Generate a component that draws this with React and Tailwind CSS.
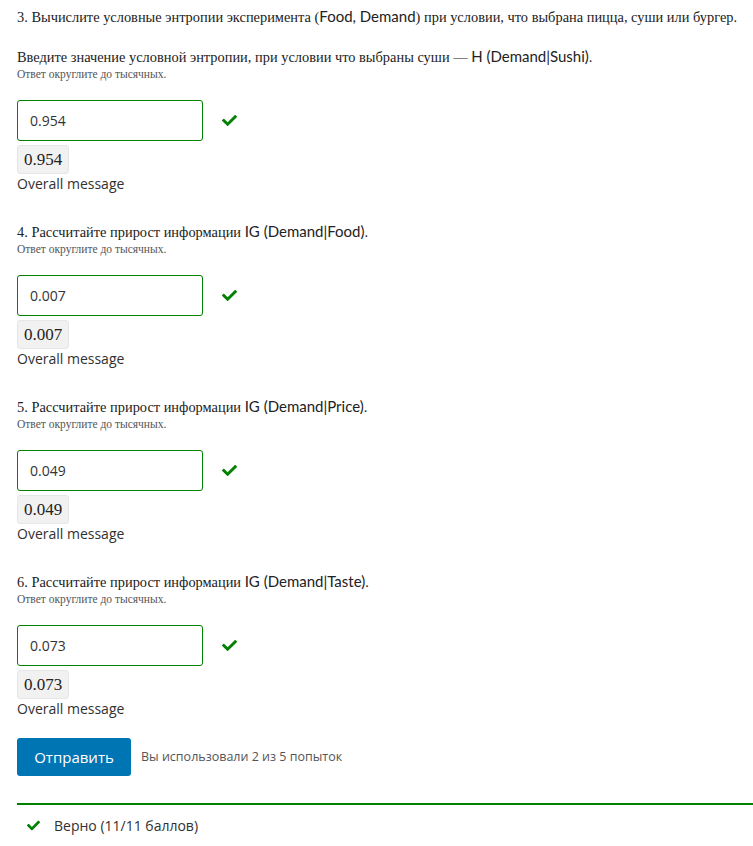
import React from 'react';

const serif = 'font-["Liberation_Serif",serif]';
const ui = 'font-["Open_Sans",sans-serif]';

function Check({ className = '' }) {
  return (
    <svg viewBox="0 0 512 512" className={className} fill="#008100">
      <path d="M173.9 439.4 7.5 273c-10-10-10-26.2 0-36.2l36.2-36.2c10-10 26.2-10 36.2 0L192 312.7 432.1 72.6c10-10 26.2-10 36.2 0l36.2 36.2c10 10 10 26.2 0 36.2L210.1 439.4c-10 10-26.2 10-36.2 0z" />
    </svg>
  );
}

function Math({ children }) {
  return <span className={`font-["Lato",sans-serif] text-[15px]`}>{children}</span>;
}

function Answer({ value }) {
  return (
    <div>
      <div className="flex items-center">
        <div className={`w-[186px] h-[41px] border border-[#008100] rounded-[3px] flex items-center px-3 ${ui} text-[14px] text-[#333]`}>
          {value}
        </div>
        <Check className="w-[15px] h-[15px] ml-[19px]" />
      </div>
      <div className="mt-[4px] inline-flex h-[29px] items-center px-[6px] bg-[#f1f1f1] border border-[#e6e6e6] rounded-[3px]">
        <span className={`${serif} text-[17px] text-[#222]`}>{value}</span>
      </div>
      <div className={`${ui} text-[14px] leading-[20px] text-[#313131]`}>Overall message</div>
    </div>
  );
}

function Hint() {
  return <div className={`${serif} text-[11.5px] leading-[14px] text-[#555]`}>Ответ округлите до тысячных.</div>;
}

function Question({ title, value }) {
  return (
    <div className="mt-[27px]">
      <div className={`${serif} text-[14.4px] leading-[20px] text-[#222]`}>{title}</div>
      <Hint />
      <div className="mt-[19px]">
        <Answer value={value} />
      </div>
    </div>
  );
}

export default function App() {
  return (
    <div className="bg-white w-[753px] h-[846px] pl-[17px] pt-[6px] overflow-hidden">
      <div className={`${serif} text-[14.4px] leading-[20px] text-[#222] whitespace-nowrap`}>
        3. Вычислите условные энтропии эксперимента (<Math>Food, Demand</Math>) при условии, что выбрана пицца, суши или бургер.
      </div>
      <div className={`mt-[19px] ${serif} text-[14.4px] leading-[20px] text-[#222]`}>
        Введите значение условной энтропии, при условии что выбраны суши — <Math>H (Demand|Sushi)</Math>.
      </div>
      <Hint />
      <div className="mt-[19px]">
        <Answer value="0.954" />
      </div>

      <Question title={<>4. Рассчитайте прирост информации <Math>IG (Demand|Food)</Math>.</>} value="0.007" />
      <Question title={<>5. Рассчитайте прирост информации <Math>IG (Demand|Price)</Math>.</>} value="0.049" />
      <Question title={<>6. Рассчитайте прирост информации <Math>IG (Demand|Taste)</Math>.</>} value="0.073" />

      <div className="mt-[19px] flex items-center">
        <button className={`w-[114px] h-[38px] bg-[#0075b4] rounded-[3px] text-white ${ui} text-[15px]`}>Отправить</button>
        <span className={`ml-[10px] ${ui} text-[12.5px] text-[#555]`}>Вы использовали 2 из 5 попыток</span>
      </div>

      <div className="mt-[27px] border-t-2 border-[#008100]" />
      <div className="flex items-center pl-[10px] pt-[10px]">
        <Check className="w-[13px] h-[13px]" />
        <span className={`ml-[14px] ${ui} text-[14px] text-[#313131]`}>Верно (11/11 баллов)</span>
      </div>
    </div>
  );
}
